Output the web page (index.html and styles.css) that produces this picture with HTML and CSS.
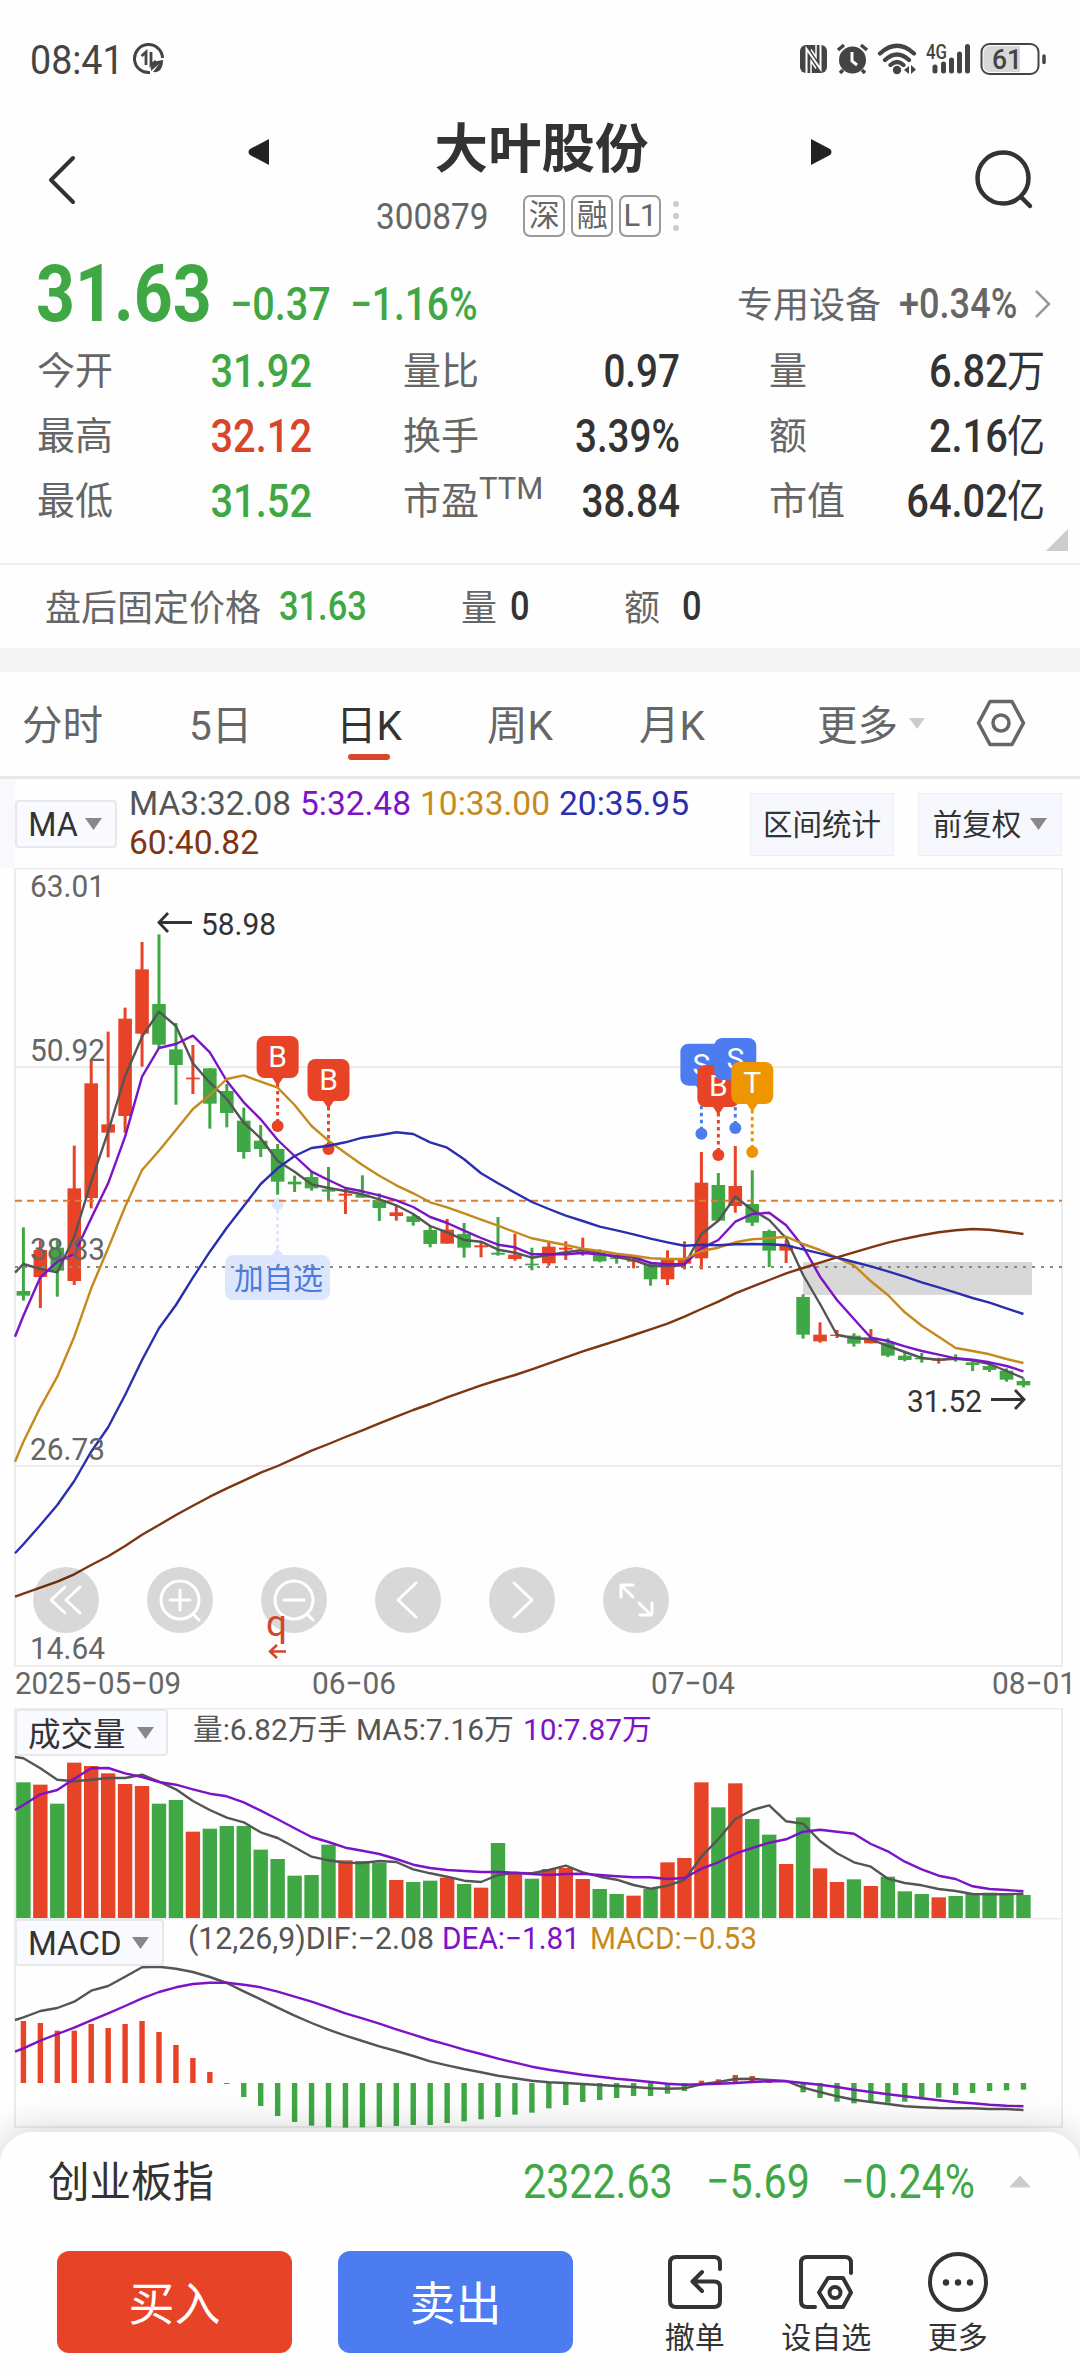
FILE: index.html
```html
<!DOCTYPE html>
<html lang="zh-CN">
<head>
<meta charset="utf-8">
<title>大叶股份 300879</title>
<link rel="stylesheet" href="styles.css">
</head>
<body>
<header class="status">
  <span class="clock">08:41</span>
  <svg class="saver" width="32" height="32" viewBox="0 0 32 32" fill="none" stroke="#444" stroke-width="3"><path d="M17 29.500A14 14 0 1 1 29.500 15"/><path d="M8.500 13L13 9V22M18 9V22L23 18" stroke-width="2.800"/><path d="M18 28C17 20 22 18 30 17C30 25 27 30 20 29L26 21" fill="#444" stroke="none"/></svg>
  <svg class="sysicons" width="250" height="40" viewBox="796 38 250 40">
    <rect x="800" y="45" width="27" height="28" rx="6" fill="#444"/>
    <path d="M806.500 74V49L820.500 69V44" fill="none" stroke="#fff" stroke-width="2"/>
    <path d="M811 74V61L816 68.500M816 44V57L811 49.500" fill="none" stroke="#fff" stroke-width="1.500"/>
    <circle cx="852.500" cy="60" r="13.500" fill="#444"/>
    <path d="M838 50L844 45M867 50L861 45M843 70L840 73M862 70L865 73" stroke="#444" stroke-width="3.500"/>
    <path d="M852 52V61L857 65" fill="none" stroke="#fff" stroke-width="3"/>
    <g fill="none" stroke="#444" stroke-width="4.200" stroke-linecap="round"><path d="M880 53.500Q897 38 914 53.500M885 60Q897 49 909 60M890.500 65Q897 59 903.500 65"/></g>
    <circle cx="897" cy="70" r="4.200" fill="#444"/>
    <path d="M904 70L909 66V74ZM911 65V74L916 69.500Z" fill="#444"/>
    <text x="926" y="58.500" font-size="20" font-weight="500" textLength="21" lengthAdjust="spacingAndGlyphs" fill="#444">4G</text>
    <g stroke="#444" stroke-width="5" stroke-linecap="round"><path d="M935 67V71M943.500 64V71M951.500 60V71M959.500 54V71M967.500 46.500V71"/></g>
    <rect x="981.500" y="44" width="57" height="30" rx="8" fill="#fff" stroke="#444" stroke-width="2"/>
    <path d="M990 46H1020V72H990Q983.500 72 983.500 65V53Q983.500 46 990 46Z" fill="#d8d8d8"/>
    <path d="M1044 56V62.500" stroke="#444" stroke-width="3.500" stroke-linecap="round"/>
    <text x="992" y="69" font-size="28" font-weight="500" textLength="30" lengthAdjust="spacingAndGlyphs" fill="#444">61</text>
  </svg>
</header>

<nav class="titlebar">
  <svg class="back" width="30" height="52" viewBox="0 0 30 52" fill="none" stroke="#333" stroke-width="4" stroke-linecap="round" stroke-linejoin="round"><path d="M26 4L4 26L26 48"/></svg>
  <svg class="prev" width="24" height="30" viewBox="0 0 24 30"><path d="M22 2V28L3 18Q0 15 3 12Z" fill="#222"/></svg>
  <div class="heading">
    <h1>大叶股份</h1>
    <div class="code">
      <span class="ticker">300879</span>
      <span class="tag">深</span><span class="tag">融</span><span class="tag">L1</span>
      <span class="dots"><i></i><i></i><i></i></span>
    </div>
  </div>
  <svg class="next" width="24" height="30" viewBox="0 0 24 30"><path d="M2 2V28L21 18Q24 15 21 12Z" fill="#222"/></svg>
  <svg class="search" width="60" height="60" viewBox="0 0 60 60" fill="none" stroke="#333" stroke-width="4.500" stroke-linecap="round"><circle cx="29" cy="28" r="25.500"/><path d="M47 47L56 56"/></svg>
</nav>

<section class="quote">
  <div class="price-row">
    <span class="price g">31.63</span><span class="chg g">−0.37</span><span class="pct g">−1.16%</span>
    <span class="sector">专用设备</span><span class="sector-pct">+0.34%</span>
    <svg class="go" width="18" height="30" viewBox="0 0 18 30" fill="none" stroke="#999" stroke-width="2.500"><path d="M2 2L15 15L2 28"/></svg>
  </div>
  <dl class="stats">
    <dt>今开</dt><dd class="g">31.92</dd><dt>量比</dt><dd>0.97</dd><dt>量</dt><dd>6.82<b>万</b></dd>
    <dt>最高</dt><dd class="r">32.12</dd><dt>换手</dt><dd>3.39%</dd><dt>额</dt><dd>2.16<b>亿</b></dd>
    <dt>最低</dt><dd class="g">31.52</dd><dt>市盈<sup>TTM</sup></dt><dd>38.84</dd><dt>市值</dt><dd>64.02<b>亿</b></dd>
  </dl>
  <svg class="corner" width="22" height="22" viewBox="0 0 22 22"><path d="M22 0V22H0Z" fill="#ccc"/></svg>
</section>

<section class="after">
  <span class="lbl">盘后固定价格</span><span class="num g">31.63</span><span class="lbl">量</span><span class="num">0</span><span class="lbl">额</span><span class="num">0</span>
</section>

<nav class="tabs">
  <span>分时</span><span>5日</span><span class="on">日K</span><span>周K</span><span>月K</span><span>更多</span>
  <svg class="caret" width="16" height="11" viewBox="0 0 16 11"><path d="M0 0H16L8 11Z" fill="#ccc"/></svg>
  <svg class="gear" width="50" height="50" viewBox="0 0 50 50" fill="none" stroke="#666" stroke-width="3.500" stroke-linejoin="round"><path d="M14 3.500H36L47.500 25L36 46.500H14L2.500 25Z"/><circle cx="25" cy="25" r="8"/></svg>
</nav>

<section class="ma">
  <div class="pick"><span>MA</span><svg width="17" height="12" viewBox="0 0 17 12"><path d="M0 0H17L8.500 12Z" fill="#888"/></svg></div>
  <svg class="legend" width="600" height="80" viewBox="120 784 600 80" font-size="33.500">
    <text x="129" y="815" textLength="162" lengthAdjust="spacingAndGlyphs" fill="#555">MA3:32.08</text>
    <text x="300" y="815" textLength="111" lengthAdjust="spacingAndGlyphs" fill="#7d13c6">5:32.48</text>
    <text x="420" y="815" textLength="130" lengthAdjust="spacingAndGlyphs" fill="#c68a1c">10:33.00</text>
    <text x="559" y="815" textLength="130" lengthAdjust="spacingAndGlyphs" fill="#2b2fae">20:35.95</text>
    <text x="129" y="854" textLength="130" lengthAdjust="spacingAndGlyphs" fill="#7f3511">60:40.82</text>
  </svg>
  <div class="opt">区间统计</div>
  <div class="opt">前复权<svg width="17" height="12" viewBox="0 0 17 12"><path d="M0 0H17L8.500 12Z" fill="#888"/></svg></div>
</section>

<section class="kline">
  <svg id="kline" width="1080" height="800" viewBox="0 868 1080 800"></svg>
  <div class="tools">
    <svg viewBox="0 0 66 66"><path d="M32 20L18 33L32 46M47 20L33 33L47 46"/></svg>
    <svg viewBox="0 0 66 66"><circle cx="33" cy="33" r="19"/><path d="M33 23V43M23 33H43M46 47L52 53"/></svg>
    <svg viewBox="0 0 66 66"><circle cx="33" cy="33" r="19"/><path d="M23 33H43M46 47L52 53"/></svg>
    <svg viewBox="0 0 66 66"><path d="M41 16L23 33L41 50"/></svg>
    <svg viewBox="0 0 66 66"><path d="M25 16L43 33L25 50"/></svg>
    <svg viewBox="0 0 66 66"><path d="M18 30V20Q18 18 20 18H30M18 18L30 30M49 36V46Q49 48 47 48H37M48 48L36 36"/></svg>
  </div>
  <svg class="event" width="26" height="46" viewBox="264 1610 26 46"><text x="266" y="1636" font-size="36" textLength="21" lengthAdjust="spacingAndGlyphs" fill="#d2452c">q</text><path d="M286 1651.500H270M277 1645L270 1651.500L277 1658" fill="none" stroke="#d2452c" stroke-width="2.500"/></svg>
</section>

<div class="dates">
  <svg width="1080" height="42" viewBox="0 1666 1080 42" font-size="31" fill="#666">
    <text x="15" y="1694" textLength="166" lengthAdjust="spacingAndGlyphs">2025−05−09</text>
    <text x="312" y="1694" textLength="84" lengthAdjust="spacingAndGlyphs">06−06</text>
    <text x="651" y="1694" textLength="84" lengthAdjust="spacingAndGlyphs">07−04</text>
    <text x="992" y="1694" textLength="84" lengthAdjust="spacingAndGlyphs">08−01</text>
  </svg>
</div>

<section class="vol">
  <svg id="vol" width="1080" height="210" viewBox="0 1708 1080 210"></svg>
  <div class="pick"><span>成交量</span><svg width="17" height="12" viewBox="0 0 17 12"><path d="M0 0H17L8.500 12Z" fill="#888"/></svg></div>
</section>
<section class="macd">
  <svg id="macd" width="1080" height="214" viewBox="0 1918 1080 214"></svg>
  <div class="pick"><span>MACD</span><svg width="17" height="12" viewBox="0 0 17 12"><path d="M0 0H17L8.500 12Z" fill="#888"/></svg></div>
</section>

<footer class="dock">
  <div class="index">
    <span class="name">创业板指</span>
    <span class="n1">2322.63</span><span class="n2">−5.69</span><span class="n3">−0.24%</span>
    <svg width="22" height="13" viewBox="0 0 22 13"><path d="M11 1L21 12H1Z" fill="#ccc" stroke="#ccc" stroke-linejoin="round"/></svg>
  </div>
  <div class="actions">
    <button class="buy">买入</button>
    <button class="sell">卖出</button>
    <div class="act"><svg width="62" height="62" viewBox="664 2251 62 62"><path d="M720 2269V2263Q720 2257 714 2257H676Q670 2257 670 2263V2301Q670 2307 676 2307H714Q720 2307 720 2301V2287Q720 2281.500 714 2281.500H693M702 2272L692.500 2281.500L702 2291"/></svg>撤单</div>
    <div class="act"><svg width="62" height="62" viewBox="795 2251 62 62"><path d="M851 2273V2263Q851 2257 845 2257H807Q801 2257 801 2263V2301Q801 2307 807 2307H815M828 2278H843L851 2292.500L843 2307H828L819 2292.500Z"/><circle cx="835" cy="2292.500" r="5.500"/></svg>设自选</div>
    <div class="act"><svg width="62" height="62" viewBox="927 2251 62 62"><circle cx="958" cy="2282" r="28"/><g fill="#333" stroke="none"><circle cx="946" cy="2282.500" r="3.200"/><circle cx="958" cy="2282.500" r="3.200"/><circle cx="970" cy="2282.500" r="3.200"/></g></svg>更多</div>
  </div>
</footer>
<script src="script.js"></script>
</body>
</html>
```
FILE: styles.css
```css
* { box-sizing: border-box; }
body { margin: 0; width: 1080px; height: 2376px; overflow: hidden; background: #fefefe; color: #333; font-family: Roboto, "Noto Sans CJK SC", sans-serif; font-size: 38px; position: relative; }
svg { display: block; flex: none; }
svg text { font-family: Roboto, "Noto Sans CJK SC", sans-serif; }
.g { color: #3fa845 !important; }
.r { color: #d9452b !important; }

.status { height: 96px; padding: 12px 0 0 30px; display: flex; align-items: center; color: #444; }
.clock { width: 103px; padding-top: 12px; font-size: 40px; white-space: nowrap; transform: scaleX(.94); transform-origin: left; }
.saver { margin-top: 10px; }
.sysicons { margin: 8px 34px 0 auto; }

.titlebar { height: 160px; display: flex; align-items: flex-start; padding-left: 47px; }
.back { margin-top: 58px; }
.prev { margin: 41px 0 0 170px; }
.heading { width: 540px; display: flex; flex-direction: column; }
h1 { margin: 16px 0 0 1px; font-size: 53.5px; line-height: 76px; text-align: center; font-weight: 700; }
.code { display: flex; align-items: center; height: 46px; margin-top: 5px; padding-left: 105px; color: #666; }
.ticker { width: 147px; font-size: 37.500px; transform: scaleX(.89); transform-origin: left; }
.tag { width: 42px; height: 42px; margin-right: 6px; border: 2px solid #999; border-radius: 7px; font-size: 31px; line-height: 37px; text-align: center; letter-spacing: -.5px; }
.dots { display: flex; flex-direction: column; gap: 6px; margin-left: 6px; }
.dots i { width: 6px; height: 6px; border-radius: 50%; background: #ccc; }
.next { margin: 41px 0 0 -2px; }
.search { margin: 54px 0 0 141px; }

.quote { height: 307px; position: relative; }
.price-row { height: 82px; display: flex; align-items: flex-start; white-space: nowrap; }
.price-row span { transform-origin: left; line-height: 60px; margin-top: 18px; }
.price-row .price { width: 194px; margin: 8px 0 0 36px; font-size: 79px; line-height: 60px; font-weight: 700; transform: scaleX(.86); }
.chg { width: 120px; font-size: 46px; font-weight: 500; transform: scaleX(.86); }
.pct { width: 387px; font-size: 46px; font-weight: 500; transform: scaleX(.845); }
.price-row .sector { width: 162px; font-size: 36px; color: #666; margin-top: 20px; }
.sector-pct { width: 135px; font-size: 42px; font-weight: 500; color: #666; transform: scaleX(.86); }
.go { margin-top: 33px; }
.stats { margin: 1px 0 0; padding-left: 37px; display: grid; grid-template-columns: 110px 256px 136px 230px 110px 163px; grid-auto-rows: 65px; line-height: 65px; }
.stats dt { color: #666; white-space: nowrap; }
.stats dd { margin: 0; font-size: 46px; font-weight: 500; text-align: right; white-space: nowrap; transform: scaleX(.865); transform-origin: right; }
.stats dd:nth-of-type(3n+1) { width: 165px; }
.stats dd:nth-of-type(3n+2) { width: 141px; transform: scaleX(.84); }
.stats dd:nth-of-type(3n) { width: 166px; }
.stats dd b { font-weight: 400; font-size: 44px; margin-left: -1px; }
.stats sup { font-size: 31px; line-height: 0; vertical-align: 15px; }
.corner { position: absolute; left: 1046px; top: 273px; }

.after { height: 85px; border-top: 2px solid #f0f0f0; display: grid; align-items: center; grid-template-columns: 234px 182px 49px 114px 58px 1fr; padding: 0 0 0 45px; }
.lbl { color: #666; font-size: 36px; padding-bottom: 3px; }
.after .num { font-size: 40px; font-weight: 500; transform: scaleX(.86); transform-origin: left; padding-bottom: 1px; }

.tabs { border-top: 24px solid #f4f4f4; border-bottom: 3px solid #e8e8e8; height: 131px; display: grid; grid-template-columns: 167px 147px 151px 152px 178px 92px 67px 50px; align-items: center; padding-left: 22px; font-size: 40.5px; color: #666; }
.tabs span { position: relative; top: -2px; }
.tabs svg { margin-bottom: 2px; }
.tabs .on { color: #333; }
.tabs .on::after { content: ""; position: absolute; left: 12px; top: 61px; width: 42px; height: 6px; border-radius: 3px; background: #d9452b; }

.pick { display: flex; flex: none; align-items: center; background: #f9faff; border: 2px solid #e8e8ea; border-radius: 4px; color: #333; }
.ma { height: 89px; border-left: 15px solid #f9f9fd; display: flex; }
.ma .pick { width: 102px; height: 48px; margin-top: 21px; padding-left: 10px; font-size: 34px; gap: 6px; }
.ma .pick span { transform: scaleX(.95); }
.legend { margin: 5px 30px 0 3px; width: 600px; }
.opt { width: 144px; height: 63px; margin: 14px 24px 0 0; padding-bottom: 5px; flex: none; background: #f7f8fe; border: 1px solid #eee; display: flex; align-items: center; justify-content: center; font-size: 29.500px; gap: 9px; }
.opt svg { margin-top: 4px; }
.opt:last-child { margin-right: 0; }

.kline, .vol, .macd { position: relative; }
.kline { height: 798px; }
.tools { position: absolute; left: 33px; top: 699px; display: flex; gap: 48px; }
.tools svg { width: 66px; height: 66px; border-radius: 50%; background: rgba(0,0,0,.15); fill: none; stroke: #fff; stroke-width: 3; stroke-linecap: round; stroke-linejoin: round; }
.event { position: absolute; left: 264px; top: 742px; overflow: visible; }
.dates { height: 42px; }
.vol { height: 210px; }
.macd { height: 214px; }
.vol .pick, .macd .pick { position: absolute; left: 15px; top: 1px; height: 47px; width: 153px; padding-left: 11px; font-size: 32.500px; gap: 11px; }
.vol .pick span { padding-bottom: 3px; }
.macd .pick { width: 149px; font-size: 34px; gap: 8px; }
.macd .pick span { transform: scaleX(.97); transform-origin: left; }

.dock { position: relative; height: 244px; background: #fefefe; border-radius: 32px 32px 0 0; box-shadow: 0 -4px 34px rgba(0,0,0,.16); }
.index { height: 98px; display: flex; align-items: center; white-space: nowrap; color: #3fa845; font-size: 49px; }
.index span { transform-origin: left; }
.index .name { color: #333; font-size: 41.5px; margin-left: 48px; width: 475px; padding-bottom: 4px; }
.index .n1 { width: 183px; transform: scaleX(.84); }
.index .n2 { width: 135px; transform: scaleX(.84); }
.index .n3 { width: 168px; transform: scaleX(.84); }
.actions { display: flex; padding: 21px 0 0 57px; }
button { width: 235px; height: 102px; margin-right: 46px; border: 0; border-radius: 12px; padding: 0 0 4px; background: #e74326; color: #fff; font: 46px "Noto Sans CJK SC", sans-serif; }
.sell { background: #4c7cf0; margin-right: 56px; }
.act { width: 131.500px; display: flex; flex-direction: column; align-items: center; font-size: 30px; line-height: 44px; }
.act svg { margin-bottom: 3px; fill: none; stroke: #333; stroke-width: 4; stroke-linecap: round; stroke-linejoin: round; }
```
FILE: script.js
```js
const RED = '#e74326', GREEN = '#3fa845', GREY = '#555', PURPLE = '#7d13c6', GOLD = '#c68a1c', BLUE = '#2b2fae', BROWN = '#7f3511';
const x = i => +(23.4 + 16.95 * i).toFixed(2);

// colour, high, body top, body bottom, low; thirds of a pixel below y = 860
const candles = `G 1102 1293 1307 1322,R 1142 1170 1251 1344,G 1142 1163 1232 1310,R 857 985 1263 1275,R 600 670 1014 1045,R 515 793 818 892,R 443 476 768 818,R 246 328 521 620,G 223 432 554 565,G 489 568 615 734,R 555 653 658 702,G 625 625 731 806,G 672 693 759 802,G 743 782 876 896,G 795 842 867 891,G 852 867 965 1004,G 947 965 973 996,G 935 951 985 992,G 921 988 995 1020,R 985 1001 1007 1062,G 946 1003 1013 1013,G 1000 1020 1044 1083,R 1037 1057 1068 1082,G 1065 1069 1086 1097,G 1097 1110 1152 1162,R 1077 1109 1151 1151,G 1089 1122 1163 1193,R 1147 1156 1162 1192,G 1071 1178 1184 1187,R 1121 1184 1197 1202,G 1163 1211 1216 1231,R 1145 1160 1210 1217,R 1144 1163 1169 1200,R 1133 1175 1180 1187,G 1168 1180 1204 1207,G 1185 1192 1197 1211,R 1188 1198 1205 1225,G 1205 1212 1258 1277,R 1171 1198 1258 1275,R 1144 1198 1211 1228,R 876 968 1195 1228,G 939 975 1082 1082,R 858 978 1038 1058,G 931 1032 1088 1098,G 1109 1113 1172 1221,R 1140 1156 1172 1209,G 1303 1311 1424 1436,R 1387 1424 1444 1448,R 1410 1424 1428 1434,G 1420 1427 1451 1460,R 1407 1433 1450 1450,G 1435 1448 1487 1491,G 1475 1487 1500 1504,G 1479 1494 1498 1508,R 1493 1498 1502 1511,G 1483 1496 1500 1505,G 1500 1507 1515 1533,G 1510 1518 1530 1536,G 1525 1532 1559 1565,G 1555 1563 1576 1582`.split(',').map(s => s.split(' '));

// first value of every line sits on the left frame, the rest on the candles
const ma = {
  [GREY]: [1238,1212,1227,1237,1130,965,815,648,530,455,498,610,668,717,788,835,903,935,973,984,993,1003,1018,1036,1062,1098,1117,1140,1145,1169,1178,1193,1185,1177,1170,1180,1192,1200,1218,1219,1216,1122,1082,1010,1050,1080,1135,1245,1332,1425,1434,1438,1458,1476,1494,1499,1496,1501,1512,1533,1554],
  [PURPLE]: [1430,1367,1252,1205,1182,1075,970,830,650,564,552,527,577,663,727,778,840,888,935,960,984,994,1006,1021,1041,1071,1089,1112,1134,1154,1162,1183,1183,1183,1179,1183,1188,1191,1209,1213,1212,1165,1140,1085,1062,1058,1096,1160,1250,1320,1377,1433,1443,1459,1473,1484,1495,1499,1507,1518,1534],
  [GOLD]: [1805,1745,1642,1550,1430,1285,1165,1040,930,872,810,747,705,657,646,665,683,735,798,842,879,915,947,976,1000,1027,1042,1060,1079,1097,1116,1135,1145,1155,1166,1173,1181,1187,1195,1197,1197,1173,1163,1147,1138,1135,1130,1152,1170,1193,1216,1264,1305,1357,1397,1430,1464,1473,1483,1497,1509],
  [BLUE]: [2080,2053,1995,1935,1863,1775,1702,1605,1500,1405,1335,1253,1175,1103,1038,972,925,888,864,857,847,833,826,817,822,847,863,898,940,970,998,1026,1047,1067,1083,1100,1111,1123,1136,1147,1157,1154,1156,1153,1152,1153,1156,1168,1180,1193,1206,1219,1234,1250,1267,1282,1298,1314,1328,1345,1362],
  [BROWN]: [2210,2201,2183,2165,2143,2115,2089,2058,2024,1995,1965,1937,1910,1885,1862,1838,1818,1795,1772,1752,1731,1711,1690,1670,1650,1632,1612,1594,1576,1560,1545,1528,1510,1492,1474,1458,1442,1425,1408,1391,1370,1347,1325,1300,1280,1260,1240,1224,1208,1192,1177,1162,1148,1136,1126,1117,1111,1107,1109,1115,1122]
};
const volTop = [277,284,341,218,228,250,282,288,341,330,425,416,408,408,479,507,557,555,464,511,513,518,570,576,572,563,582,593,459,548,566,537,534,567,597,612,617,597,517,504,277,352,280,387,434,522,382,535,576,568,588,560,604,612,622,618,612,608,612,615];
const volMa = {
  [GREY]: [201,205,235,269,274,269,264,264,254,275,298,333,360,383,397,427,444,472,500,511,518,519,513,516,538,550,560,572,576,555,549,550,540,527,547,560,569,585,596,587,570,500,447,387,360,346,394,401,453,490,517,530,566,579,586,597,603,612,613,613,611],
  [PURPLE]: [360,345,313,300,266,235,234,250,261,276,284,298,311,319,337,362,388,415,441,456,473,482,492,507,524,534,540,543,546,546,548,552,555,552,551,555,559,562,562,567,564,536,517,491,474,458,448,425,419,425,431,462,484,515,538,557,567,589,597,600,604]
};
const hist = [993,999,1022,1022,1002,1014,1002,993,1026,1065,1104,1146,1182,1221,1248,1278,1296,1307,1312,1313,1312,1311,1308,1305,1305,1299,1294,1288,1281,1274,1268,1255,1245,1236,1230,1224,1218,1218,1211,1203,1172,1168,1155,1158,1174,1179,1207,1224,1235,1240,1238,1238,1235,1228,1223,1215,1209,1203,1201,1199];
const macd = {
  [GREY]: [990,982,963,954,935,902,888,860,832,830,836,846,861,879,904,928,953,977,999,1019,1037,1053,1069,1083,1098,1114,1126,1137,1147,1157,1165,1172,1177,1179,1182,1185,1188,1191,1195,1196,1195,1183,1176,1167,1166,1170,1173,1193,1206,1219,1229,1236,1242,1249,1252,1254,1255,1255,1257,1257,1260],
  [PURPLE]: [1085,1075,1052,1032,1013,991,970,948,925,906,892,882,878,878,884,892,905,920,935,952,970,985,1001,1018,1034,1050,1064,1079,1092,1106,1118,1130,1139,1147,1154,1160,1166,1171,1176,1181,1184,1183,1181,1179,1176,1174,1174,1179,1184,1191,1199,1206,1213,1219,1225,1231,1236,1240,1244,1247,1249]
};

const rect = (l, t, w, h, fill, extra = '') => `<rect x="${l}" y="${t}" width="${w}" height="${h}" fill="${fill}" ${extra}/>`;
const path = (d, stroke, w = 2, extra = '') => `<path d="${d}" fill="none" stroke="${stroke}" stroke-width="${w}" ${extra}/>`;
const text = (l, y, w, size, fill, s) => `<text x="${l}" y="${y}" font-size="${size}" textLength="${w}" lengthAdjust="spacingAndGlyphs" fill="${fill}">${s}</text>`;
const lines = (set, base) => Object.entries(set).map(([c, v]) =>
  path('M' + v.map((n, i) => `${i ? x(i - 1) : 15} ${(base + n / 3).toFixed(1)}`).join('L'), c, 2.4, 'stroke-linejoin="round"')).join('');

// price chart
let k = path('M15 1067H1062M15 1466H1062', '#ececec') + path('M15 868.5H1062V1666H15Z', '#ececec', 2);
k += rect(803, 1262, 229, 33, '#d8d8d8');
k += candles.map(([c, h, t, b, l], i) => {
  const col = c === 'R' ? RED : GREEN, y = n => 860 + n / 3;
  return rect(x(i) - 1.5, y(h), 3, (l - h) / 3, col) + rect(x(i) - 6.8, y(t), 13.6, (b - t) / 3, col);
}).join('');
const marker = (i, top, c, s) => {
  const m = x(i);
  return [
    path(`M${m} ${top + 48}V${top + 86}`, c, 3, 'stroke-dasharray="3.500 3.500"') + `<circle cx="${m}" cy="${top + 90}" r="6" fill="${c}"/>`,
    rect(m - 21, top, 42, 42, c, 'rx="8"') + `<path d="M${m - 6} ${top + 41}H${m + 6}L${m} ${top + 50}Z" fill="${c}"/>` +
    `<text x="${m}" y="${top + 31}" text-anchor="middle" font-size="30" fill="#fff">${s}</text>`
  ];
};
const marks = [marker(15, 1036, RED, 'B'), marker(18, 1059, RED, 'B'), marker(40, 1043.7, '#4c7cf0', 'S'), marker(41, 1065, RED, 'B'), marker(42, 1038, '#4c7cf0', 'S'), marker(43, 1062, '#ee9600', 'T')];
k += marks.map(m => m[0]).join('');
k += path('M277.600 1210V1250', '#dce6fc', 3, 'stroke-dasharray="3.500 3.500"') + '<circle cx="277.600" cy="1204" r="6" fill="#dce6fc"/>';
k += rect(225, 1255, 105, 45, '#dce6fc', 'rx="8"') + '<path d="M271 1256H284L277.600 1248Z" fill="#dce6fc"/>';
k += text(234, 1288.5, 89, 29.5, '#4c7cde', '加自选');
k += path('M15 1200.700H1062', '#e07a34', 2, 'stroke-dasharray="7 5"') + path('M15 1267H1062', '#888', 2.2, 'stroke-dasharray="3 6"');
k += lines(ma, 860) + marks.map(m => m[1]).join('');
[['63.01', 897], ['50.92', 1061], ['38.83', 1260], ['26.73', 1460], ['14.64', 1659]].forEach(([s, y]) => { k += text(30, y, 75, 31, '#666', s); });
k += text(201, 935, 75, 31, '#333', '58.98') + text(907, 1412, 75, 31, '#333', '31.52');
k += path('M192 922.500H160M168 913L159 922.500L168 932M991 1399.500H1023M1015 1390L1024 1399.500L1015 1409', '#333', 2.8);
document.getElementById('kline').innerHTML = k;

// volume
let v = path('M15 1918V1708.500H1062V1918', '#ececec', 2);
v += volTop.map((n, i) => rect(x(i) - 7.2, 1690 + n / 3, 14.4, (684 - n) / 3, candles[i][0] === 'R' ? RED : GREEN)).join('');
v += lines(volMa, 1690);
v += text(193, 1740, 154, 29, '#555', '量:6.82万手') + text(356, 1740, 158, 29, '#555', 'MA5:7.16万') + text(523, 1740, 129, 29, PURPLE, '10:7.87万');
document.getElementById('vol').innerHTML = v;

// MACD
let m = path('M15 1918.500H1062V2127H15Z', '#ececec', 2);
m += hist.map((n, i) => rect(x(i) - 2.7, 1690 + Math.min(n, 1179) / 3, 5.4, Math.abs(n - 1179) / 3, n < 1179 ? RED : GREEN)).join('');
m += lines(macd, 1690);
m += text(188, 1949, 246, 30.5, '#555', '(12,26,9)DIF:−2.08') + text(442, 1949, 138, 30.5, PURPLE, 'DEA:−1.81') + text(590, 1949, 167, 30.5, GOLD, 'MACD:−0.53');
document.getElementById('macd').innerHTML = m;
```
